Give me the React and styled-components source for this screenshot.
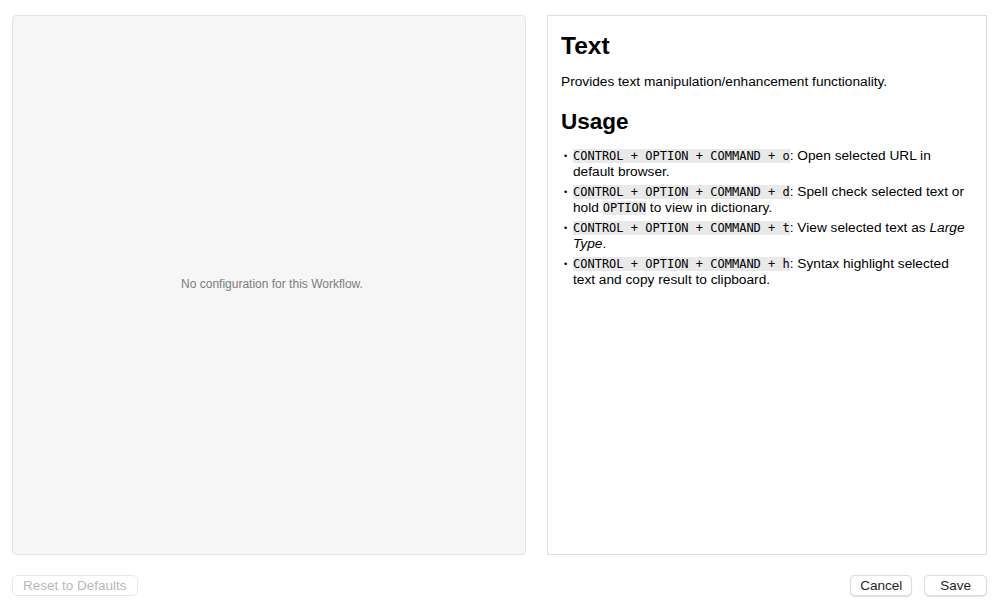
import React from "react";
import styled, { createGlobalStyle } from "styled-components";

const GlobalStyle = createGlobalStyle`
  html, body {
    margin: 0;
    padding: 0;
    background: #ffffff;
    font-family: "Liberation Sans", Arial, sans-serif;
  }
`;

const Window = styled.div`
  width: 1000px;
  height: 610px;
  box-sizing: border-box;
  padding: 15px 13px 0 12px;
  display: flex;
  flex-direction: column;
`;

const Panels = styled.div`
  display: flex;
  gap: 21px;
  height: 540px;
`;

const ConfigPane = styled.div`
  width: 514px;
  box-sizing: border-box;
  background: #f6f6f6;
  border: 1px solid #e4e4e4;
  border-radius: 4px;
  display: flex;
  align-items: center;
  justify-content: center;
`;

const EmptyNote = styled.div`
  font-size: 12px;
  color: #7d7d7d;
  margin: -2px 0 0 6px;
`;

const ReadmePane = styled.div`
  flex: 1;
  box-sizing: border-box;
  background: #fff;
  border: 1px solid #dedede;
  padding: 15px 14px 0 13px;
  color: #000;
`;

const Title = styled.h1`
  font-size: 24.5px;
  font-weight: 700;
  margin: 0 0 13px;
  line-height: 30px;
`;

const Para = styled.p`
  font-size: 13.7px;
  line-height: 16px;
  margin: 0 0 18px;
`;

const Subtitle = styled.h2`
  font-size: 22.5px;
  font-weight: 700;
  margin: 0 0 12px;
  line-height: 28px;
`;

const List = styled.ul`
  margin: 0;
  padding: 0;
  list-style: none;
`;

const Item = styled.li`
  position: relative;
  padding-left: 12px;
  font-size: 13.7px;
  line-height: 16px;
  margin-bottom: 4px;

  &::before {
    content: "•";
    position: absolute;
    left: 3px;
    top: 0;
    font-size: 9px;
  }
`;

const Code = styled.code`
  font-family: "DejaVu Sans Mono", "Liberation Mono", monospace;
  font-size: 12px;
  line-height: 16px;
  background: #e9e9e9;
  padding: 0;
`;

const Footer = styled.div`
  display: flex;
  align-items: center;
  margin-top: 20px;
`;

const Button = styled.button`
  height: 21px;
  box-sizing: border-box;
  padding: 0 ${(p) => p.$pad || 12}px;
  font-family: "Liberation Sans", Arial, sans-serif;
  font-size: 13.5px;
  color: ${(p) => (p.disabled ? "#b9b9b9" : "#252525")};
  background: #fff;
  border: 1px solid ${(p) => (p.disabled ? "#e8e8e8" : "#dcdcdc")};
  border-radius: 5px;
  box-shadow: ${(p) => (p.disabled ? "none" : "0 0.5px 1px rgba(0,0,0,0.12)")};
  cursor: default;
`;

const Spacer = styled.div`
  flex: 1;
`;

const ButtonGroup = styled.div`
  display: flex;
  gap: 12px;
`;

const shortcuts = [
  { key: "o", text: <>: Open selected URL in default browser.</> },
  {
    key: "d",
    text: (
      <>
        : Spell check selected text or hold <Code>OPTION</Code> to view in dictionary.
      </>
    ),
  },
  {
    key: "t",
    text: (
      <>
        : View selected text as <em>Large Type</em>.
      </>
    ),
  },
  { key: "h", text: <>: Syntax highlight selected text and copy result to clipboard.</> },
];

export default function App() {
  return (
    <>
      <GlobalStyle />
      <Window>
        <Panels>
          <ConfigPane>
            <EmptyNote>No configuration for this Workflow.</EmptyNote>
          </ConfigPane>
          <ReadmePane>
            <Title>Text</Title>
            <Para>Provides text manipulation/enhancement functionality.</Para>
            <Subtitle>Usage</Subtitle>
            <List>
              {shortcuts.map((s) => (
                <Item key={s.key}>
                  <Code>CONTROL + OPTION + COMMAND + {s.key}</Code>
                  {s.text}
                </Item>
              ))}
            </List>
          </ReadmePane>
        </Panels>
        <Footer>
          <Button disabled $pad={10}>
            Reset to Defaults
          </Button>
          <Spacer />
          <ButtonGroup>
            <Button $pad={9}>Cancel</Button>
            <Button $pad={15}>Save</Button>
          </ButtonGroup>
        </Footer>
      </Window>
    </>
  );
}
